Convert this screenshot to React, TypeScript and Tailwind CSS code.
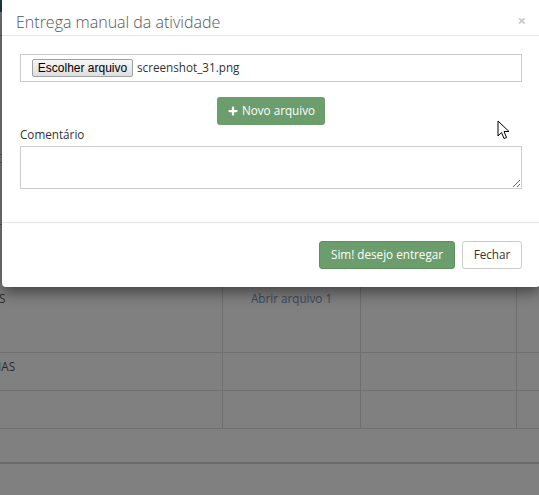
import { Plus } from "lucide-react";

const font = { fontFamily: '"Open Sans", "Noto Sans", sans-serif' };

function BackgroundTable() {
  return (
    <div className="absolute inset-0 bg-[#808080]" style={font}>
      {/* bits of the page peeking out on the left edge */}
      <div className="absolute left-0 top-0 h-[12px] w-[3px] bg-[#1f3b44]" />
      <div className="absolute left-0 top-[35px] h-px w-[3px] bg-[#5a5a5a]" />
      <div className="absolute left-0 top-[154px] h-px w-[3px] bg-[#5a5a5a]" />
      <div className="absolute left-0 top-[162px] h-px w-[3px] bg-[#5a5a5a]" />
      <div className="absolute left-0 top-[224px] h-px w-[3px] bg-[#5a5a5a]" />

      <div className="h-[285px]" />
      <div className="grid grid-cols-[223px_138px_156px_1fr] text-[11.7px]">
        <div className="h-[68px] border-b border-r border-[#6f6f6f] pt-[5px] text-[#2b2b2b]">
          <span className="-ml-[1px]">S</span>
        </div>
        <div className="h-[68px] border-b border-r border-[#6f6f6f] pt-[5px] text-center text-[#3c4a5c]">
          Abrir arquivo 1
        </div>
        <div className="h-[68px] border-b border-r border-[#6f6f6f]" />
        <div className="h-[68px] border-b border-[#6f6f6f]" />

        <div className="h-[38px] border-b border-r border-[#6f6f6f] pt-[5px] text-[#2b2b2b]">
          <span className="-ml-[2px]">IAS</span>
        </div>
        <div className="h-[38px] border-b border-r border-[#6f6f6f]" />
        <div className="h-[38px] border-b border-r border-[#6f6f6f]" />
        <div className="h-[38px] border-b border-[#6f6f6f]" />

        <div className="h-[38px] border-b border-r border-[#6f6f6f]" />
        <div className="h-[38px] border-b border-r border-[#6f6f6f]" />
        <div className="h-[38px] border-b border-r border-[#6f6f6f]" />
        <div className="h-[38px] border-b border-[#6f6f6f]" />
      </div>
      <div className="h-[33px]" />
      <div className="h-[2px] bg-[#6a6a6a]" />
    </div>
  );
}

function Cursor() {
  return (
    <svg
      className="absolute left-[497px] top-[120px]"
      width="14"
      height="21"
      viewBox="0 0 14 21"
    >
      <path
        d="M1 1 L1 16 L4.5 12.5 L7 18.5 L9.5 17.5 L7 11.5 L12 11.5 Z"
        fill="#ffffff"
        stroke="#000000"
        strokeWidth="1"
        strokeLinejoin="round"
      />
    </svg>
  );
}

export default function App() {
  return (
    <div className="relative h-[495px] w-full overflow-hidden" style={font}>
      <BackgroundTable />

      <div className="absolute left-[2px] top-0 w-[538px] rounded-b-[4px] bg-white shadow-[0_5px_15px_rgba(0,0,0,0.5)]">
        <div className="flex h-[36px] items-start justify-between border-b border-[#e5e5e5] pl-[14px] pr-[14px] pt-[10px]">
          <h4 className="text-[16px] font-light leading-[24px] text-[#555]">
            Entrega manual da atividade
          </h4>
          <span className="pt-[1px] text-[15px] font-bold leading-[18px] text-[#c8c8c8]">
            ×
          </span>
        </div>

        <div className="px-[18px] pb-[33px] pt-[18px]">
          <div className="flex h-[28px] items-center border border-[#cccccc] pl-[11px]">
            <span
              className="flex h-[18px] w-[101px] items-center justify-center rounded-[2px] border border-[#a0a0a0] bg-gradient-to-b from-[#f6f6f6] to-[#dedede] text-[12px] text-black"
              style={{ fontFamily: '"Liberation Sans", Arial, sans-serif' }}
            >
              Escolher arquivo
            </span>
            <span className="ml-[4px] text-[11.7px] text-[#333]">
              screenshot_31.png
            </span>
          </div>

          <div className="mt-[15px] flex justify-center">
            <button
              type="button"
              className="flex h-[28px] w-[108px] items-center justify-center gap-[3px] rounded-[3px] bg-[#6c9d6c] text-[11.7px] text-white"
            >
              <Plus size={12} strokeWidth={4.5} />
              Novo arquivo
            </button>
          </div>

          <label className="block h-[18px] text-[11.7px] leading-[18px] text-[#333]">
            Comentário
          </label>
          <textarea
            readOnly
            className="mt-[3px] block h-[43px] w-full border border-[#cccccc] outline-none"
          />
        </div>

        <div className="flex justify-end gap-[7px] border-t border-[#e5e5e5] px-[18px] pb-[18px] pt-[18px]">
          <button
            type="button"
            className="h-[28px] w-[136px] rounded-[3px] border border-[#5f8f5f] bg-[#6c9d6c] text-[11.7px] text-white"
          >
            Sim! desejo entregar
          </button>
          <button
            type="button"
            className="h-[28px] w-[60px] rounded-[3px] border border-[#cccccc] bg-white text-[11.7px] text-[#333]"
          >
            Fechar
          </button>
        </div>
      </div>

      <Cursor />
    </div>
  );
}
